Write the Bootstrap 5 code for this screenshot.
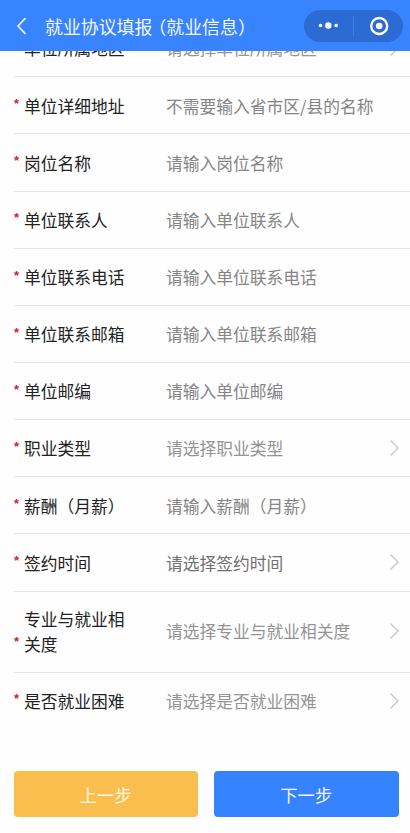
<!DOCTYPE html>
<html lang="zh-CN">
<head>
<meta charset="utf-8">
<meta name="viewport" content="width=device-width, initial-scale=1">
<title>就业协议填报</title>
<link href="https://cdn.jsdelivr.net/npm/bootstrap@5.3.0/dist/css/bootstrap.min.css" rel="stylesheet">
<style>
body{font-family:"Noto Sans CJK SC",sans-serif;font-size:16.75px;line-height:25px;background:#fefefe;color:#222;height:833px;overflow:hidden}
.topbar{height:51px;background:#3884ff;color:#f2f7ff}
.topbar h1{font-size:17.9px;line-height:26px;margin-left:18px}
.open-paren{margin-left:5px;font-feature-settings:"halt"}
.back{margin-left:16px}
.capsule{width:99px;height:32px;background:#2b6bd3;margin-right:7px;margin-top:1px}
.capsule .sep{width:1px;height:20px;background:#4480dc}
.form-rows{margin-top:-30.9px}
.field-row{height:57.15px;margin-left:13.5px;border-bottom:1px solid #e4e4e4;padding-top:1.6px}
.field-row.tall{height:81.2px;padding-top:.6px}
.field-row:last-child{border-bottom:0;padding-top:0}
.star{width:10.5px;padding-left:.6px;color:#d0252b;font-family:"Liberation Sans",sans-serif;font-weight:700;font-size:13px;line-height:25px;height:25px;margin-top:-5px}
.tall .star{margin-top:19px}
.label-text{width:102px}
.hint{margin-left:40px;color:#858585}
.hint.pick{color:#949494}
.hint.dark{color:#707070}
.arrow{margin-right:10px;margin-top:-1.5px}
.actions{padding:0 11.5px 0 13.5px;gap:16px;margin-top:41.5px}
.step-btn{height:45.6px;border-radius:4px;font-size:17.3px;color:#fff;border:0;padding:1px 0 0}
.step-btn.prev,.step-btn.prev:hover{background:#fabe4e;color:#fff8e8}
.step-btn.next,.step-btn.next:hover{background:#3583fe;color:#f4f8ff}
</style>
</head>
<body class="d-flex flex-column">
<header class="topbar flex-shrink-0 d-flex align-items-center">
  <svg class="back" width="11" height="18" viewBox="0 0 11 18" fill="none" stroke="#e8f1ff" stroke-width="1.7"><path d="M9.5 1.2 2 9l7.5 7.8"/></svg>
  <h1 class="mb-0 fw-normal text-nowrap">就业协议填报<span class="open-paren">（</span>就业信息）</h1>
  <div class="capsule rounded-pill ms-auto d-flex align-items-center">
    <svg width="49" height="32" viewBox="0 0 49 32" fill="#fff"><circle cx="16.5" cy="15.5" r="1.8"/><circle cx="24.3" cy="15.5" r="3.2"/><circle cx="32.2" cy="15.5" r="1.8"/></svg>
    <span class="sep"></span>
    <svg width="49" height="32" viewBox="0 0 49 32"><circle cx="25.2" cy="16" r="8" fill="none" stroke="#fff" stroke-width="2.3"/><circle cx="25.2" cy="16" r="3.3" fill="#fff"/></svg>
  </div>
</header>
<main class="flex-grow-1 overflow-hidden">
  <div class="form-rows">
    <div class="field-row d-flex align-items-center"><span class="star">*</span><span class="label-text">单位所属地区</span><span class="hint pick">请选择单位所属地区</span><svg class="arrow ms-auto" width="11" height="18" viewBox="0 0 11 18" fill="none" stroke="#c8c8c8" stroke-width="1.4"><path d="M1.5 1.5 9 9l-7.5 7.5"/></svg></div>
    <div class="field-row d-flex align-items-center"><span class="star">*</span><span class="label-text">单位详细地址</span><span class="hint">不需要输入省市区/县的名称</span></div>
    <div class="field-row d-flex align-items-center"><span class="star">*</span><span class="label-text">岗位名称</span><span class="hint">请输入岗位名称</span></div>
    <div class="field-row d-flex align-items-center"><span class="star">*</span><span class="label-text">单位联系人</span><span class="hint">请输入单位联系人</span></div>
    <div class="field-row d-flex align-items-center"><span class="star">*</span><span class="label-text">单位联系电话</span><span class="hint">请输入单位联系电话</span></div>
    <div class="field-row d-flex align-items-center"><span class="star">*</span><span class="label-text">单位联系邮箱</span><span class="hint">请输入单位联系邮箱</span></div>
    <div class="field-row d-flex align-items-center"><span class="star">*</span><span class="label-text">单位邮编</span><span class="hint">请输入单位邮编</span></div>
    <div class="field-row d-flex align-items-center"><span class="star">*</span><span class="label-text">职业类型</span><span class="hint pick">请选择职业类型</span><svg class="arrow ms-auto" width="11" height="18" viewBox="0 0 11 18" fill="none" stroke="#c8c8c8" stroke-width="1.4"><path d="M1.5 1.5 9 9l-7.5 7.5"/></svg></div>
    <div class="field-row d-flex align-items-center"><span class="star">*</span><span class="label-text">薪酬（月薪）</span><span class="hint">请输入薪酬（月薪）</span></div>
    <div class="field-row d-flex align-items-center"><span class="star">*</span><span class="label-text">签约时间</span><span class="hint dark">请选择签约时间</span><svg class="arrow ms-auto" width="11" height="18" viewBox="0 0 11 18" fill="none" stroke="#c8c8c8" stroke-width="1.4"><path d="M1.5 1.5 9 9l-7.5 7.5"/></svg></div>
    <div class="field-row tall d-flex align-items-center"><span class="star">*</span><span class="label-text">专业与就业相关度</span><span class="hint pick">请选择专业与就业相关度</span><svg class="arrow ms-auto" width="11" height="18" viewBox="0 0 11 18" fill="none" stroke="#c8c8c8" stroke-width="1.4"><path d="M1.5 1.5 9 9l-7.5 7.5"/></svg></div>
    <div class="field-row d-flex align-items-center"><span class="star">*</span><span class="label-text">是否就业困难</span><span class="hint pick">请选择是否就业困难</span><svg class="arrow ms-auto" width="11" height="18" viewBox="0 0 11 18" fill="none" stroke="#c8c8c8" stroke-width="1.4"><path d="M1.5 1.5 9 9l-7.5 7.5"/></svg></div>
  </div>
  <div class="actions d-flex">
    <button type="button" class="btn step-btn prev flex-fill">上一步</button>
    <button type="button" class="btn step-btn next flex-fill">下一步</button>
  </div>
</main>
<script src="https://cdn.jsdelivr.net/npm/bootstrap@5.3.0/dist/js/bootstrap.bundle.min.js"></script>
</body>
</html>
